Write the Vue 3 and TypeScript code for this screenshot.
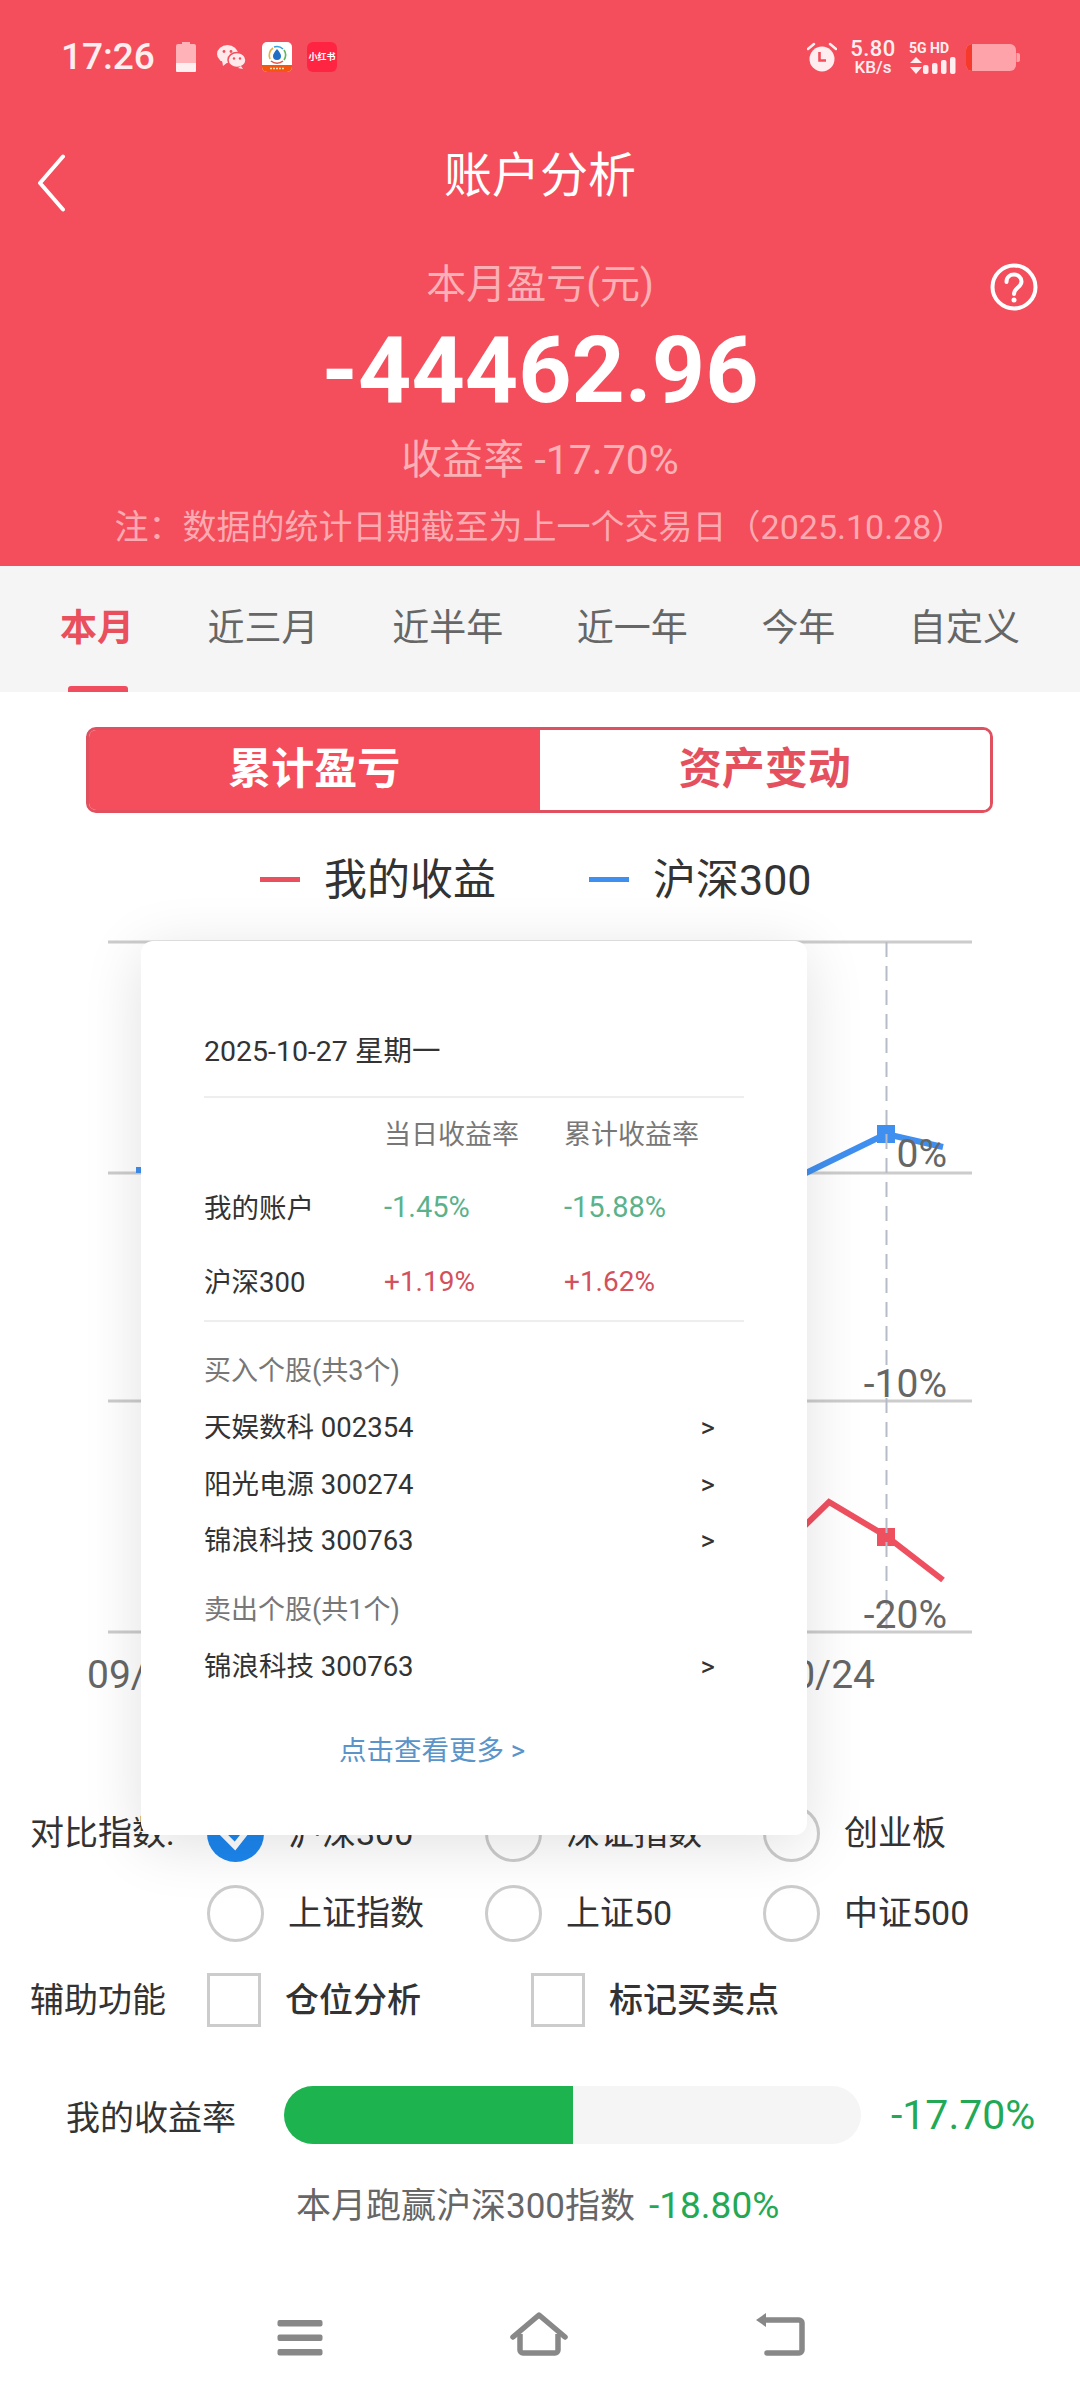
<script setup lang="ts">
interface Stock { name: string }
const tabs: string[] = ['本月', '近三月', '近半年', '近一年', '今年', '自定义']
const indices: { name: string; on: boolean }[] = [
  { name: '沪深300', on: true },
  { name: '深证指数', on: false },
  { name: '创业板', on: false },
  { name: '上证指数', on: false },
  { name: '上证50', on: false },
  { name: '中证500', on: false }
]
const bought: Stock[] = [
  { name: '天娱数科 002354' },
  { name: '阳光电源 300274' },
  { name: '锦浪科技 300763' }
]
const sold: Stock[] = [{ name: '锦浪科技 300763' }]
const gridY: number[] = [12, 243, 471, 702]
const note: string = '注\uFF1A数据的统计日期截至为上一个交易日\uFF082025.10.28\uFF09'
</script>

<template>
  <div class="page">
    <header class="hero">
      <div class="status">
        <span class="time">17:26</span>
        <svg class="st-batt" width="20" height="30" viewBox="0 0 20 30">
          <path d="M6 0h8v2h4a2 2 0 0 1 2 2v17H0V4a2 2 0 0 1 2-2h4z" fill="#ffb3b9" />
          <path d="M0 21h20v8a1 1 0 0 1-1 1H1a1 1 0 0 1-1-1z" fill="#ffeef0" />
        </svg>
        <svg class="st-wx" width="29" height="24" viewBox="0 0 29 24">
          <ellipse cx="10.5" cy="9" rx="10.5" ry="9" fill="#ffe9eb" />
          <path d="M5 15l1 6 5-4z" fill="#ffe9eb" />
          <ellipse cx="20" cy="15" rx="9" ry="7.6" fill="#ffe9eb" stroke="#f44e5c" stroke-width="1.5" />
          <path d="M24 21l2 3-5-1z" fill="#ffe9eb" />
          <circle cx="7" cy="6.5" r="1.4" fill="#f44e5c" /><circle cx="14" cy="6.5" r="1.4" fill="#f44e5c" />
          <circle cx="17" cy="13.5" r="1.2" fill="#f44e5c" /><circle cx="23" cy="13.5" r="1.2" fill="#f44e5c" />
        </svg>
        <svg class="st-app" width="30" height="30" viewBox="0 0 30 30">
          <rect width="30" height="30" rx="5" fill="#fff" />
          <path d="M0 23h30v2a5 5 0 0 1-5 5H5a5 5 0 0 1-5-5z" fill="#f4560f" />
          <path d="M8 17a9 9 0 0 1 3-11" fill="none" stroke="#e8b23a" stroke-width="1.6" />
          <path d="M12 5a9 9 0 0 1 9 2" fill="none" stroke="#3aa0d8" stroke-width="1.6" />
          <path d="M22 8a9 9 0 0 1 0 10" fill="none" stroke="#5cb85c" stroke-width="1.6" />
          <path d="M9 19a9 9 0 0 0 12 0" fill="none" stroke="#e0584a" stroke-width="1.6" />
          <path d="M15 7c2.5 3 4 5 4 7a4 4 0 0 1-8 0c0-2 1.500-4 4-7z" fill="#1f6fc4" />
          <path d="M8 26.500h14" stroke="#ffd9a8" stroke-width="1.5" stroke-dasharray="2 1" />
        </svg>
        <span class="st-xhs">小红书</span>
        <span class="st-gap"></span>
        <svg class="st-alarm" width="30" height="30" viewBox="0 0 30 30">
          <circle cx="15" cy="17" r="12.500" fill="#ffeef0" />
          <path d="M12.500 10v8.500h6.500" fill="none" stroke="#f44e5c" stroke-width="2.600" />
          <path d="M1 7l6-5M29 7l-6-5" stroke="#ffeef0" stroke-width="2.500" stroke-linecap="round" />
        </svg>
        <span class="st-speed"><b>5.80</b><i>KB/s</i></span>
        <span class="st-net">
          <span class="st-5g">5G HD</span>
          <svg width="47" height="17" viewBox="0 0 47 17">
            <path d="M1 6l6-6 6 6zM1 10h12l-6 7z" fill="#ffeef0" />
            <rect x="14" y="8" width="5.500" height="9" rx="2" fill="#ffeef0" />
            <rect x="23" y="6" width="5.500" height="11" rx="2" fill="#ffeef0" />
            <rect x="32" y="3" width="5.500" height="14" rx="2" fill="#ffeef0" />
            <rect x="41" y="0" width="5.500" height="17" rx="2" fill="#ffeef0" />
          </svg>
        </span>
        <svg class="st-power" width="54" height="27" viewBox="0 0 54 27">
          <rect width="50" height="27" rx="6" fill="#ffa3aa" />
          <path d="M6 0a6 6 0 0 0-6 6v15a6 6 0 0 0 6 6z" fill="#f7392c" />
          <path d="M50.500 9h1.500a2 2 0 0 1 2 2v5a2 2 0 0 1-2 2h-1.500z" fill="#ffa3aa" />
        </svg>
      </div>

      <div class="nav">
        <svg class="nav-back" width="30" height="58" viewBox="0 0 30 58">
          <path d="M27 2.500L4 29l23 26.500" fill="none" stroke="#fff" stroke-width="4" stroke-linecap="round" stroke-linejoin="round" />
        </svg>
        <h1 class="nav-title">账户分析</h1>
      </div>

      <div class="summary">
        <p class="s-label">本月盈亏(元)</p>
        <svg class="s-help" width="48" height="48" viewBox="0 0 48 48">
          <circle cx="24" cy="24" r="21.500" fill="none" stroke="#fff" stroke-width="4" />
          <path d="M16.500 19c0-5 3.500-7.500 7.500-7.500s7.500 2.800 7.500 7c0 6-7.500 6-7.500 12.500" fill="none" stroke="#fff" stroke-width="4" stroke-linecap="round" />
          <circle cx="24" cy="37" r="2.500" fill="#fff" />
        </svg>
        <p class="s-amount">-44462.96</p>
        <p class="s-rate">收益率 -17.70%</p>
        <p class="s-note">{{ note }}</p>
      </div>
    </header>

    <nav class="tabs">
      <span v-for="(t, i) in tabs" :key="t" class="tab" :class="{ active: i === 0 }">{{ t }}</span>
    </nav>

    <div class="segment">
      <span class="seg seg-on">累计盈亏</span>
      <span class="seg seg-off">资产变动</span>
    </div>

    <div class="legend">
      <span class="dash dash-red"></span><span class="lg-text">我的收益</span>
      <span class="dash dash-blue"></span><span class="lg-text">沪深300</span>
    </div>

    <section class="chart">
      <svg class="chart-svg" width="1080" height="780" viewBox="0 0 1080 780">
        <line v-for="y in gridY" :key="y" x1="108" x2="972" :y1="y" :y2="y" stroke="#cccccc" stroke-width="3" />
        <polyline points="136,240 806,243 886,204 943,217" fill="none" stroke="#3f8ff0" stroke-width="6" />
        <rect x="877" y="195" width="18" height="18" fill="#3f8ff0" />
        <polyline points="780,620 829,572 886,606 943,650" fill="none" stroke="#ef5060" stroke-width="6" />
        <rect x="877" y="598" width="18" height="18" fill="#ef5060" />
        <line x1="886.500" x2="886.500" y1="12" y2="702" stroke="#b5bcc8" stroke-width="2" stroke-dasharray="15 9" />
        <text class="ax" x="947" y="237" text-anchor="end">0%</text>
        <text class="ax" x="947" y="467" text-anchor="end">-10%</text>
        <text class="ax" x="947" y="698" text-anchor="end">-20%</text>
        <text class="ax" x="87" y="758">09/29</text>
        <text class="ax" x="875" y="758" text-anchor="end">10/24</text>
      </svg>

      <aside class="modal">
        <div class="m-date">2025-10-27 星期一</div>
        <div class="m-line"></div>
        <div class="m-table">
          <span></span><span class="muted">当日收益率</span><span class="muted">累计收益率</span>
          <span>我的账户</span><span class="down">-1.45%</span><span class="down">-15.88%</span>
          <span>沪深300</span><span class="up">+1.19%</span><span class="up">+1.62%</span>
        </div>
        <div class="m-line"></div>
        <div class="m-head m-head-buy muted">买入个股(共3个)</div>
        <div v-for="s in bought" :key="s.name" class="m-row"><span>{{ s.name }}</span><span>&gt;</span></div>
        <div class="m-head m-head-sell muted">卖出个股(共1个)</div>
        <div v-for="s in sold" :key="s.name" class="m-row"><span>{{ s.name }}</span><span>&gt;</span></div>
        <div class="m-more">点击查看更多 &gt;</div>
      </aside>
    </section>

    <section class="compare">
      <span class="opt-label">对比指数:</span>
      <div class="opt-grid">
        <div v-for="o in indices" :key="o.name" class="radio-item">
          <span class="radio" :class="{ 'radio-on': o.on }">
            <svg v-if="o.on" width="57" height="57" viewBox="0 0 57 57">
              <path d="M15 28l13 13 15-19" fill="none" stroke="#fff" stroke-width="6" />
            </svg>
          </span>
          <span class="radio-text">{{ o.name }}</span>
        </div>
      </div>
    </section>

    <section class="assist">
      <span class="opt-label">辅助功能</span>
      <div class="check-item first"><span class="check"></span><span class="check-text">仓位分析</span></div>
      <div class="check-item"><span class="check"></span><span class="check-text">标记买卖点</span></div>
    </section>

    <section class="progress">
      <span class="p-label">我的收益率</span>
      <div class="p-track"><div class="p-fill" :style="{ width: '50%' }"></div></div>
      <span class="p-value">-17.70%</span>
    </section>

    <p class="beat">本月跑赢沪深300指数<span class="beat-val">-18.80%</span></p>

    <footer class="sysnav">
      <svg width="46" height="36" viewBox="0 0 46 36">
        <rect x="0.500" y="0" width="45" height="6.500" rx="2" fill="#888" />
        <rect x="0.500" y="14.500" width="45" height="6.500" rx="2" fill="#888" />
        <rect x="0.500" y="29" width="45" height="6.500" rx="2" fill="#888" />
      </svg>
      <svg width="58" height="44" viewBox="0 0 58 44">
        <path d="M3 25L29 3l26 22" fill="none" stroke="#888" stroke-width="5.500" stroke-linecap="round" stroke-linejoin="round" />
        <path d="M10 22v16a3 3 0 0 0 3 3h32a3 3 0 0 0 3-3V22" fill="none" stroke="#888" stroke-width="5.500" />
      </svg>
      <svg width="50" height="44" viewBox="0 0 50 44">
        <path d="M1 8L11 1v14z" fill="#888" />
        <path d="M8 8h36a3 3 0 0 1 3 3v27a3 3 0 0 1-3 3H12" fill="none" stroke="#888" stroke-width="5.500" stroke-linecap="round" />
      </svg>
    </footer>
  </div>
</template>

<style>
html, body { margin: 0; padding: 0; background: #fff; }
</style>

<style scoped>
.page {
  width: 1080px;
  height: 2400px;
  overflow: hidden;
  background: #fff;
  font-family: Roboto, "Noto Sans CJK SC", sans-serif;
  color: #333;
}
p, h1 { margin: 0; font-weight: 400; }

.hero { height: 566px; background: #f44e5c; color: #fff; }
.status {
  height: 114px;
  padding: 0 60px 0 61px;
  box-sizing: border-box;
  display: flex;
  align-items: center;
  color: #ffeef0;
}
.time { width: 94px; font-size: 37px; line-height: 40px; font-weight: 500; white-space: nowrap; }
.st-batt { margin-left: 21px; }
.st-wx { margin-left: 21px; }
.st-app { margin-left: 16px; }
.st-xhs {
  margin-left: 15px;
  width: 30px;
  height: 30px;
  border-radius: 6px;
  background: #ff2442;
  color: #fff;
  font-size: 9px;
  font-weight: 700;
  line-height: 30px;
  text-align: center;
  white-space: nowrap;
}
.st-gap { flex: 1; }
.st-speed { margin-left: 12px; width: 48px; display: flex; flex-direction: column; align-items: center; }
.st-speed b { font-size: 22px; line-height: 20px; font-weight: 500; letter-spacing: .5px; }
.st-speed i { font-size: 17px; line-height: 17px; font-style: normal; font-weight: 500; white-space: nowrap; }
.st-net { margin-left: 12px; width: 47px; display: flex; flex-direction: column; gap: 2px; }
.st-5g { font-size: 14px; line-height: 14px; font-weight: 700; white-space: nowrap; }
.st-power { margin-left: 10px; }

.nav { height: 124px; position: relative; display: flex; align-items: center; justify-content: center; }
.nav-back { position: absolute; left: 36px; top: 40px; }
.nav-title { font-size: 48px; line-height: 60px; color: #fff; }

.summary { position: relative; text-align: center; }
.s-label { padding-top: 17px; font-size: 40px; line-height: 60px; color: #fbb0b6; }
.s-help { position: absolute; right: 42px; top: 25px; }
.s-amount { margin-top: 6px; font-size: 93px; line-height: 100px; font-weight: 700; color: #fff; }
.s-rate { margin-top: 14px; font-size: 41px; line-height: 50px; color: #fbb0b6; }
.s-note { margin-top: 20px; font-size: 34px; line-height: 44px; color: #fbaab1; white-space: nowrap; }

.tabs {
  height: 126px;
  background: #f5f5f5;
  padding: 0 60px;
  box-sizing: border-box;
  display: flex;
  justify-content: space-between;
  align-items: center;
}
.tab { position: relative; font-size: 37px; line-height: 126px; color: #666; }
.tab.active { color: #e94f5c; font-weight: 700; }
.tab.active::after {
  content: "";
  position: absolute;
  left: 8px;
  right: 6px;
  bottom: 0;
  height: 6px;
  border-radius: 3px 3px 0 0;
  background: #f04e5e;
}

.segment {
  margin: 35px 87px 0 86px;
  height: 86px;
  border: 3px solid #e0505f;
  border-radius: 10px;
  box-sizing: border-box;
  display: flex;
  overflow: hidden;
}
.seg { flex: 1; font-size: 43px; font-weight: 700; line-height: 78px; text-align: center; }
.seg-on { background: #f44e5c; color: #fff; }
.seg-off { background: #fff; color: #e5505f; }

.legend { height: 117px; padding: 16px 0 0 260px; box-sizing: border-box; display: flex; align-items: center; }
.dash { width: 40px; height: 5px; }
.dash-red { background: #e9505e; }
.dash-blue { background: #3f8ff0; margin-left: 93px; }
.lg-text { margin-left: 24px; font-size: 43px; line-height: 60px; color: #333; white-space: nowrap; }

.chart { position: relative; height: 863px; }
.chart-svg { display: block; }
.ax { font-size: 39px; fill: #666; font-family: Roboto, "Noto Sans CJK SC", sans-serif; }

.modal {
  position: absolute;
  z-index: 3;
  left: 141px;
  top: 11px;
  width: 666px;
  height: 894px;
  padding: 84px 63px 0 63px;
  box-sizing: border-box;
  border-radius: 12px;
  background: #fff;
  box-shadow: 0 10px 60px rgba(0, 0, 0, .12);
  font-size: 27.500px;
  color: #333;
}
.m-date { font-size: 28.500px; line-height: 54px; white-space: nowrap; }
.m-line { height: 2px; background: #eee; }
.m-date + .m-line { margin-top: 17px; }
.m-table { display: grid; grid-template-columns: 180px 180px 1fr; grid-auto-rows: 74px; align-items: center; }
.m-table span { margin-bottom: 6px; }
.m-table .muted { font-size: 27px; }
.m-table .down { font-size: 29px; margin-bottom: 4px; }
.m-table .up { font-size: 28px; margin-bottom: 4px; }
.muted { color: #777; }
.down { color: #5bb28a; }
.up { color: #d3505f; }
.m-head { line-height: 57px; font-size: 27px; }
.m-head-buy { margin-top: 21px; }
.m-head-sell { margin-top: 12px; }
.m-row { height: 56.500px; line-height: 56.500px; display: flex; justify-content: space-between; padding-right: 29px; white-space: nowrap; }
.m-more { margin-top: 28px; padding-left: 135px; line-height: 56px; color: #5a94c8; white-space: nowrap; }

.compare { display: flex; padding-left: 30px; }
.opt-label { width: 177px; flex: none; font-size: 34px; line-height: 80px; color: #333; white-space: nowrap; }
.opt-grid { display: grid; grid-template-columns: repeat(3, 278px); grid-auto-rows: 80px; }
.radio-item { display: flex; align-items: center; font-size: 34px; color: #333; white-space: nowrap; }
.radio-text { margin-bottom: 6px; }
.radio {
  width: 57px;
  height: 57px;
  margin-right: 24px;
  border: 3px solid #ccc;
  border-radius: 50%;
  box-sizing: border-box;
  flex: none;
  position: relative;
}
.radio-on { border: 0; background: #1c86ee; }
.radio-on svg { display: block; }

.assist { margin-top: 7px; height: 80px; padding-left: 30px; display: flex; align-items: center; }
.assist .opt-label { line-height: 80px; }
.check-item { display: flex; align-items: center; }
.check-item.first { width: 324px; }
.check { width: 54px; height: 54px; margin-right: 24px; border: 3px solid #ccc; box-sizing: border-box; flex: none; }
.check-text { margin-bottom: 6px; font-size: 34px; font-weight: 500; color: #333; white-space: nowrap; }

.progress { margin-top: 35px; height: 80px; padding-left: 66px; display: flex; align-items: center; }
.p-label { width: 218px; flex: none; font-size: 34px; color: #333; white-space: nowrap; }
.p-track { width: 577px; height: 58px; border-radius: 29px; background: #f5f5f5; overflow: hidden; flex: none; }
.p-fill { height: 100%; background: #1db34f; }
.p-value { margin-left: 30px; font-size: 41px; color: #23a955; white-space: nowrap; }

.beat { margin-top: 21px; padding-left: 296px; font-size: 35px; line-height: 60px; color: #666; white-space: nowrap; }
.beat-val { margin-left: 14px; font-size: 37px; color: #23a955; }

.sysnav {
  margin-top: 75px;
  height: 44px;
  padding-left: 277px;
  display: flex;
  align-items: flex-end;
  gap: 187px;
}
.st-alarm { flex: none; }
</style>
